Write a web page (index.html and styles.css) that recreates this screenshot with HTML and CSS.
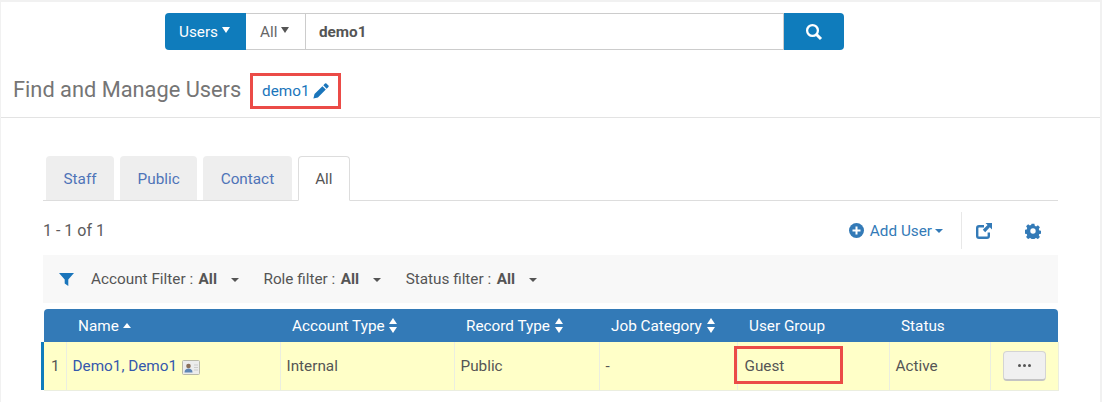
FILE: index.html
```html
<!DOCTYPE html>
<html lang="en">
<head>
<meta charset="utf-8">
<title>Find and Manage Users</title>
<link rel="stylesheet" href="styles.css">
</head>
<body>
<div class="page">
  <form class="search">
    <div class="scope scope-main"><span>Users</span><i class="tri-up-caret"></i></div>
    <div class="scope scope-sub"><span>All</span><i class="tri-up-caret"></i></div>
    <div class="query">demo1</div>
    <div class="go">
      <svg width="18" height="18" viewBox="0 0 18 18"><circle cx="7.500" cy="7.500" r="5.400" fill="none" stroke="#fff" stroke-width="2.300"/><path d="M11.500 11.500L16 16" stroke="#fff" stroke-width="3" fill="none"/></svg>
    </div>
  </form>
  <header class="title-row">
    <h1>Find and Manage Users</h1>
    <div class="crumb">
      <a>demo1</a>
      <svg width="16" height="16" viewBox="0 0 16 16"><path d="M12 .6a1 1 0 0 1 1.400 0l2 2a1 1 0 0 1 0 1.400l-1.700 1.700-3.400-3.400zM9.400 3.200l3.400 3.400-7.900 7.900L.4 15.600l1.100-4.500z" fill="#1a75bb"/></svg>
    </div>
  </header>
  <main class="content">
    <nav class="tabs">
      <a class="tab">Staff</a>
      <a class="tab">Public</a>
      <a class="tab">Contact</a>
      <a class="tab active">All</a>
    </nav>
    <div class="toolbar">
      <div class="count">1 - 1 of 1</div>
      <div class="actions">
        <a class="add">
          <svg width="15" height="15" viewBox="0 0 15 15"><circle cx="7.500" cy="7.500" r="7.500" fill="#337ab7"/><path d="M7.500 3.500v8M3.500 7.500h8" stroke="#fff" stroke-width="2"/></svg>
          <span>Add User</span><i class="caret"></i>
        </a>
        <span class="sep"></span>
        <svg class="export" width="16" height="16" viewBox="0 0 16 16"><path d="M8 3.200H3A1.800 1.800 0 0 0 1.200 5v8A1.800 1.800 0 0 0 3 14.800h8a1.800 1.800 0 0 0 1.800-1.800V9.500" fill="none" stroke="#337ab7" stroke-width="2.400"/><path d="M9.500 0H16v6.500l-2.200-2.200-4.600 4.900-2.400-2.400 4.800-4.700z" fill="#337ab7"/></svg>
        <svg class="gear" width="16" height="16" viewBox="0 0 16 16"><path fill="#337ab7" fill-rule="evenodd" d="M6.600.8h2.800l.4 2 1.300.6 1.800-1.100 2 2-1.100 1.800.5 1.300 2 .4v2.800l-2 .4-.5 1.300 1.100 1.800-2 2-1.800-1.100-1.300.5-.4 2H6.600l-.4-2-1.300-.5-1.800 1.100-2-2 1.100-1.800-.5-1.300-2-.4V6.800l2-.4.500-1.300-1.100-1.800 2-2 1.800 1.100 1.300-.6zM8 5.300a2.700 2.700 0 1 0 0 5.400 2.700 2.700 0 0 0 0-5.400z"/></svg>
      </div>
    </div>
    <div class="filters">
      <svg class="funnel" width="15" height="13" viewBox="0 0 15 13"><path d="M0 0h15L9.300 6.500V13L5.700 10.500v-4z" fill="#1a75bb"/></svg>
      <div class="filter"><span>Account Filter :</span><b>All</b><i class="caret dark"></i></div>
      <div class="filter"><span>Role filter :</span><b>All</b><i class="caret dark"></i></div>
      <div class="filter"><span>Status filter :</span><b>All</b><i class="caret dark"></i></div>
    </div>
    <table class="grid">
      <colgroup>
        <col class="c-num"><col class="c-name"><col class="c-acct"><col class="c-rec"><col class="c-job"><col class="c-grp"><col class="c-stat"><col class="c-act">
      </colgroup>
      <thead>
        <tr>
          <th></th>
          <th>Name <i class="sort-up"></i></th>
          <th>Account Type <i class="sort"></i></th>
          <th>Record Type <i class="sort"></i></th>
          <th>Job Category <i class="sort"></i></th>
          <th>User Group</th>
          <th>Status</th>
          <th></th>
        </tr>
      </thead>
      <tbody>
        <tr>
          <td class="num">1</td>
          <td><a class="link">Demo1, Demo1</a>
            <svg class="card" width="18" height="15" viewBox="0 0 18 15"><rect x=".5" y=".5" width="17" height="14" rx="1" fill="#ececec" stroke="#b9b9a8"/><circle cx="6.500" cy="6" r="2.300" fill="#8a6f5a"/><path d="M2.500 12.500c0-3 2-4 4-4s4 1 4 4z" fill="#5f86b5"/><path d="M12 5h4M12 7.500h4M12 10h4" stroke="#ccc"/></svg>
          </td>
          <td>Internal</td>
          <td>Public</td>
          <td>-</td>
          <td class="grp">Guest<span class="callout"></span></td>
          <td>Active</td>
          <td class="act"><button class="more" type="button"><i></i><i></i><i></i></button></td>
        </tr>
      </tbody>
    </table>
  </main>
</div>
</body>
</html>
```
FILE: styles.css
```css
* { box-sizing: border-box; }
html, body { margin: 0; height: 100%; }
body {
  background: #f1f1f1;
  padding: 2px 2px 0 1px;
  font-family: Roboto, "Liberation Sans", sans-serif;
  font-size: 15.300px;
  color: #555;
  overflow: hidden;
}
.page { background: #fff; height: 400px; }

.search {
  display: flex;
  margin: 0 0 0 164px;
  padding-top: 11px;
  width: 679px;
  height: 48px;
}
.scope { display: flex; align-items: center; height: 37px; padding-top: 1px; }
.scope span { margin-right: 3px; }
.scope-main {
  width: 81px;
  padding-left: 14px;
  background: #0f7cbc;
  color: #fff;
  border-radius: 4px 0 0 4px;
}
.scope-sub {
  width: 60px;
  padding-left: 14px;
  border: 1px solid #ccc;
  border-left: 0;
  color: #666;
}
.tri-up-caret {
  display: inline-block;
  margin: -4px 0 0 1px;
  border-top: 6px solid currentColor;
  border-left: 4px solid transparent;
  border-right: 4px solid transparent;
}
.scope-sub .tri-up-caret { color: #555; }
.query {
  flex: 1;
  height: 37px;
  line-height: 37px;
  padding-left: 13px;
  border: 1px solid #ccc;
  border-left: 0;
  font-weight: 700;
}
.go {
  width: 60px;
  height: 37px;
  background: #0f7cbc;
  border-radius: 0 4px 4px 0;
  display: flex;
  align-items: center;
  justify-content: center;
}

.title-row {
  display: flex;
  align-items: center;
  height: 68px;
  padding: 12px 0 0 12px;
  border-bottom: 1px solid #e3e3e3;
}
h1 {
  margin: -1px 0 0;
  font-size: 21.800px;
  font-weight: 400;
  color: #757575;
  width: 237px;
}
.crumb {
  display: flex;
  align-items: center;
  gap: 4px;
  width: 91px;
  height: 36px;
  padding: 1px 0 0 9px;
  margin-top: 2px;
  border: 3px solid #eb4b47;
  color: #1a75bb;
}

.content { padding: 38px 0 0 42px; width: 1057px; }
.tabs {
  display: flex;
  gap: 6px;
  height: 45px;
  padding-left: 3px;
  border-bottom: 1px solid #ddd;
}
.tab {
  height: 44px;
  padding: 0 17.500px;
  line-height: 46px;
  background: #eee;
  border-radius: 4px 4px 0 0;
  color: #4f74b8;
}
.tab.active {
  height: 45px;
  padding: 0 16.500px;
  background: #fff;
  border: 1px solid #ddd;
  border-bottom-color: #fff;
  color: #555;
  line-height: 44px;
}

.toolbar {
  display: flex;
  justify-content: space-between;
  align-items: center;
  height: 54px;
}
.count { font-size: 16px; margin-top: 5px; color: #5c5c5c; }
.actions { display: flex; align-items: center; height: 36px; margin-top: 5px; }
.add {
  display: flex;
  align-items: center;
  color: #337ab7;
  margin-top: -1px;
}
.add span { margin-left: 6px; padding-top: 1px; }
.caret {
  display: inline-block;
  margin-left: 3px;
  margin-top: 2px;
  border-top: 4px solid #337ab7;
  border-left: 4px solid transparent;
  border-right: 4px solid transparent;
}
.caret.dark { border-top-color: #555; margin-left: 14px; }
.sep { width: 1px; height: 37px; background: #e8e8e8; margin: 0 14px 0 18px; }
.gear { margin: 0 17px 0 33px; }

.filters {
  display: flex;
  align-items: center;
  height: 48px;
  padding-left: 16px;
  background: #f8f8f8;
}
.funnel { margin-right: 17px; }
.filter { display: flex; align-items: center; margin-right: 24.500px; }
.filter b { margin-left: 5.500px; }

.grid {
  table-layout: fixed;
  border-collapse: collapse;
  width: 1014px;
  margin: 6px 0 0 1px;
}
.c-num { width: 22px; }
.c-name { width: 214px; }
.c-acct { width: 174px; }
.c-rec { width: 145px; }
.c-job { width: 138px; }
.c-grp { width: 152px; }
.c-stat { width: 101px; }
.c-act { width: 68px; }
th {
  height: 33px;
  background: #337ab7;
  color: #fff;
  font-weight: 400;
  text-align: left;
  padding: 0 0 0 12px;
  white-space: nowrap;
}
th:first-child { border-radius: 4px 0 0 0; padding: 0; }
th:last-child { border-radius: 0 4px 0 0; }
td {
  height: 48px;
  background: #ffffc8;
  padding: 0 0 0 6px;
  border: 1px solid #ebeee0;
  border-top: 0;
}
td.num { padding-left: 7px; box-shadow: -3px 0 0 #0f7cbc; border-left: 0; }
.link { color: #3558ad; }
.card { vertical-align: -4px; margin-left: 1px; }
.grp { position: relative; padding-left: 7px; }
.callout {
  position: absolute;
  left: -4px;
  top: 4px;
  width: 109px;
  height: 38px;
  border: 3px solid #eb4b47;
}
.act { padding: 0 0 0 12px; }
.more {
  display: flex;
  align-items: center;
  justify-content: center;
  gap: 2px;
  width: 43px;
  height: 30px;
  padding: 0;
  border: 1px solid #d4d4d4;
  border-bottom: 2px solid #c4c4c4;
  border-radius: 4px;
  background: #f0f0f0;
}
.more i { width: 3px; height: 3px; border-radius: 50%; background: #555; }
.sort-up, .sort { display: inline-block; position: relative; width: 8px; vertical-align: middle; }
.sort-up {
  width: 0;
  margin-top: -2px;
  border-bottom: 5px solid #fff;
  border-left: 4px solid transparent;
  border-right: 4px solid transparent;
}
.sort { height: 15px; margin-left: 1px; margin-top: -2px; }
.sort::before, .sort::after {
  content: "";
  position: absolute;
  left: 0;
  border-left: 4px solid transparent;
  border-right: 4px solid transparent;
}
.sort::before { top: 0; border-bottom: 6px solid #fff; }
.sort::after { bottom: 0; border-top: 6px solid #fff; }
```
